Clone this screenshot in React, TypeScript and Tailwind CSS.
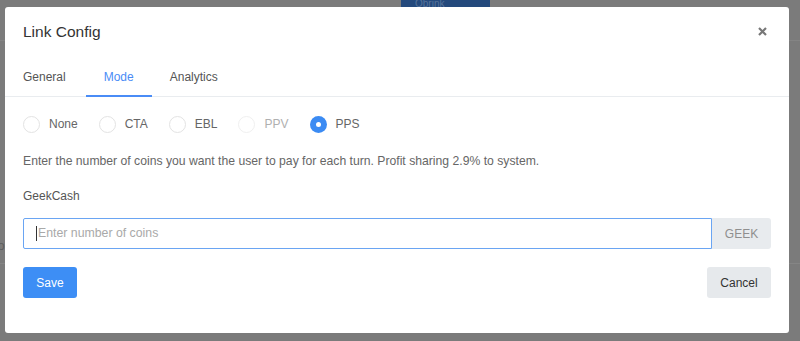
import React from "react";

const font = { fontFamily: '"Liberation Sans", Arial, sans-serif' };

function Radio({ label, checked, disabled }: { label: string; checked?: boolean; disabled?: boolean }) {
  return (
    <label className="flex items-center h-[17px]">
      {checked ? (
        <span className="w-[17px] h-[17px] rounded-full bg-[#3b8bf3] flex items-center justify-center">
          <span className="w-[5px] h-[5px] rounded-full bg-white" />
        </span>
      ) : (
        <span className={`w-[17px] h-[17px] rounded-full border ${disabled ? "border-[#f0f0f0]" : "border-[#e3e3e3]"} bg-white`} />
      )}
      <span className={`ml-[9px] text-[12px] leading-[15px] ${disabled ? "text-[#b0b0b0]" : "text-[#666666]"}`}>{label}</span>
    </label>
  );
}

export default function App() {
  return (
    <div className="relative w-[800px] h-[341px] bg-[#7b7b7b] overflow-hidden" style={font}>
      {/* background hints behind the overlay */}
      <div className="absolute left-[401px] top-0 w-[89px] h-[8px] bg-[#24497c] text-[10px] text-[#56739a] pl-[14px] leading-[8px] overflow-hidden">Obrink</div>
      <div className="absolute left-0 top-[40px] w-[800px] h-px bg-[#848484]" />
      <div className="absolute left-0 top-[263px] w-[800px] h-px bg-[#858585]" />
      <div className="absolute top-[238px] text-[13px] text-[#5e5e5e] leading-[15px]" style={{ left: -6 }}>to</div>

      <div className="absolute left-[5px] top-[7px] w-[784px] h-[326px] bg-white rounded-[3px] flex flex-col">
        <div className="flex items-start justify-between pl-[18px] pr-[22px] pt-[16px] h-[50px]">
          <div className="text-[15.5px] leading-[18px] text-[#333333]">Link Config</div>
          <svg width="9" height="9" viewBox="0 0 9 9" className="mt-[4px]">
            <path d="M1 1 L8 8 M8 1 L1 8" stroke="#777777" strokeWidth="2.2" strokeLinecap="butt" />
          </svg>
        </div>
        <div className="flex border-b border-[#e9ecef] h-[40px]">
          <div className="pl-[18px] pr-[20px] flex items-center text-[12px] text-[#555555]">General</div>
          <div className="px-[18px] flex items-center text-[12px] text-[#4a8cf6] border-b-2 border-[#4a8cf6] -mb-px pt-[2px]">Mode</div>
          <div className="px-[18px] flex items-center text-[12px] text-[#555555]">Analytics</div>
        </div>
        <div className="px-[18px]">
          <div className="flex gap-[21px] mt-[19px] h-[17px] items-center">
            <Radio label="None" />
            <Radio label="CTA" />
            <Radio label="EBL" />
            <Radio label="PPV" disabled />
            <Radio label="PPS" checked />
          </div>
          <div className="mt-[21px] text-[12.2px] leading-[15px] text-[#666666]">
            Enter the number of coins you want the user to pay for each turn. Profit sharing 2.9% to system.
          </div>
          <div className="mt-[20px] text-[12px] leading-[15px] text-[#555555]">GeekCash</div>
          <div className="flex mt-[14px] h-[31px]">
            <div className="flex-1 border border-[#6aa5f3] rounded-l-[2px] flex items-center pl-[12px]">
              <span className="w-px h-[15px] bg-[#333333] mr-[1px]" />
              <span className="text-[12.3px] text-[#a9a9a9]">Enter number of coins</span>
            </div>
            <div className="w-[59px] bg-[#e8ebee] rounded-r-[3px] flex items-center justify-center text-[12px] text-[#8f8f8f]">GEEK</div>
          </div>
          <div className="flex justify-between mt-[18px]">
            <button className="w-[54px] h-[31px] bg-[#3d8ef5] rounded-[3px] text-white text-[12px]">Save</button>
            <button className="w-[64px] h-[31px] bg-[#e6e9ec] rounded-[3px] text-[#333333] text-[12px]">Cancel</button>
          </div>
        </div>
      </div>
    </div>
  );
}
